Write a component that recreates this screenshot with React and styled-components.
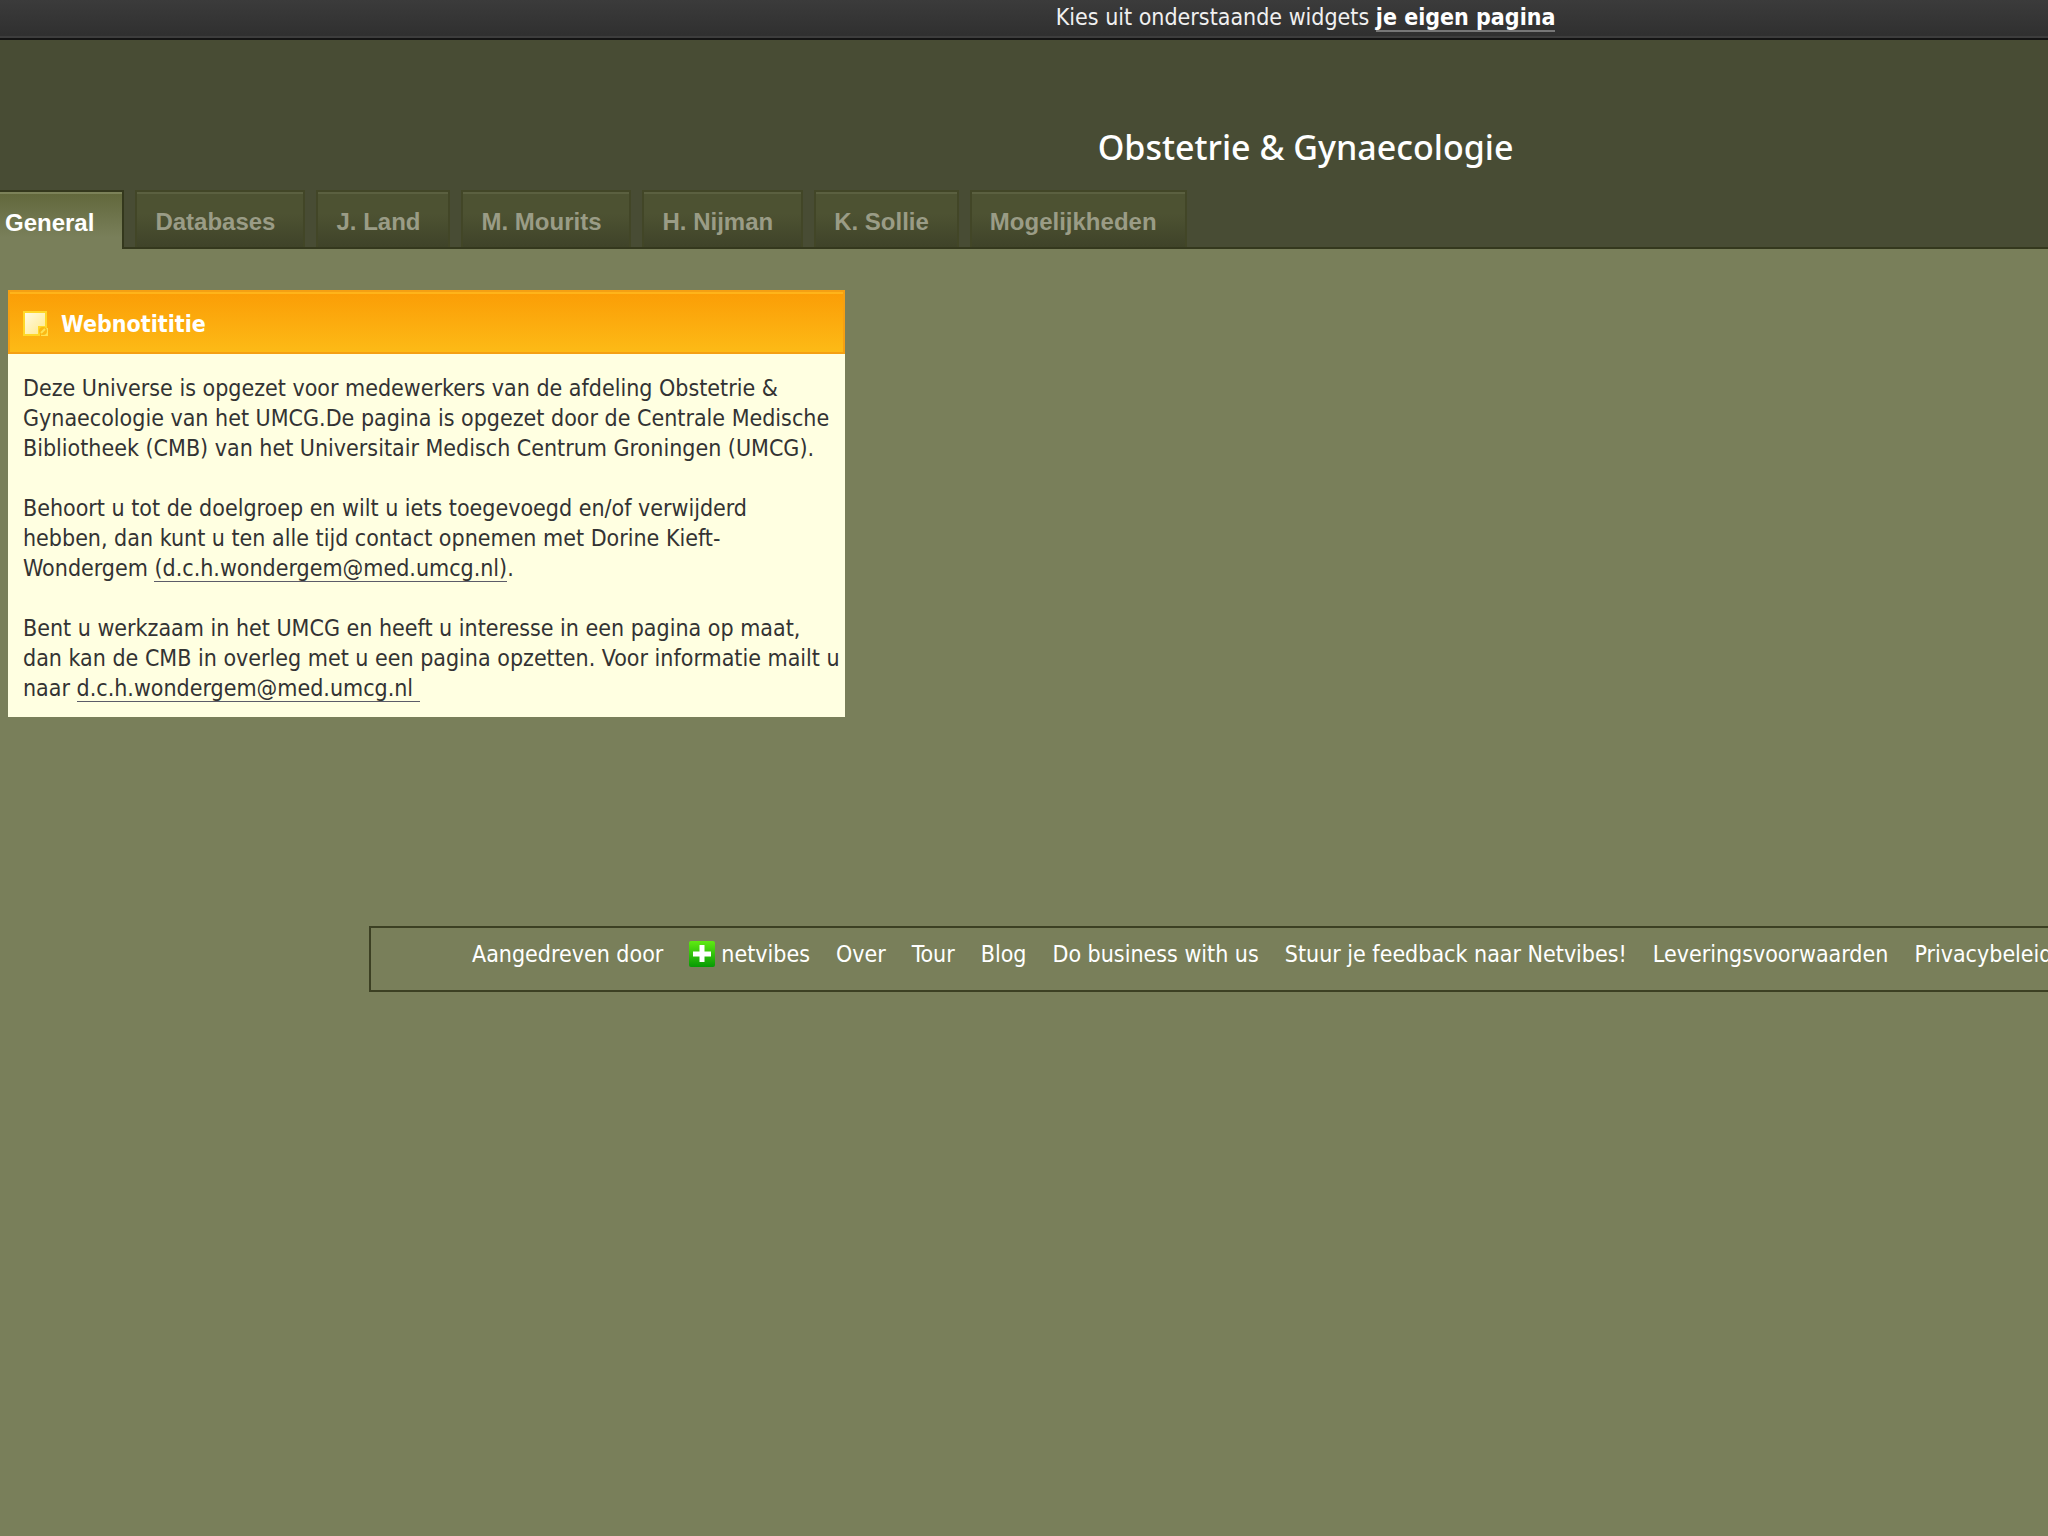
import React, { useState } from 'react';
import styled, { createGlobalStyle, css } from 'styled-components';

const GlobalStyle = createGlobalStyle`
  * {
    box-sizing: border-box;
  }

  html {
    overflow-x: hidden;
    background: #797f5a;
  }

  body {
    margin: 0;
    overflow-x: hidden;
    font-family: 'DejaVu Sans Condensed', 'DejaVu Sans', Tahoma, sans-serif;
    font-size: 23px;
    line-height: 30px;
  }
`;

// the page is wider than the window, everything in it is centered on that width
const Page = styled.div`
  width: 127.5%;
  min-height: 100vh;
  background: #797f5a;
`;

const TopBar = styled.div`
  height: 40px;
  padding-top: 2px;
  text-align: center;
  color: #f0f0f0;
  background: linear-gradient(#3b3b3b, #2f2f2f);
  border-bottom: 2px solid #141414;
  box-shadow: inset 0 -2px 0 #3d3d3d;
`;

const TopLink = styled.a`
  color: #fff;
  font-weight: bold;
  text-decoration: none;
  border-bottom: 2px solid #777;
`;

const Header = styled.header`
  padding-top: 85px;
  background: #484c34;
  border-bottom: 2px solid #34381d;
`;

const Title = styled.h1`
  margin: 0 0 21px;
  font-family: 'Noto Sans', 'Trebuchet MS', sans-serif;
  font-size: 34px;
  font-weight: 500;
  line-height: 44px;
  text-align: center;
  color: #fff;
`;

const Tabs = styled.nav`
  display: flex;
  gap: 11px;
`;

const activeTab = css`
  padding-top: 14px;
  padding-left: 5px;
  margin-bottom: -2px;
  color: #fff;
  background: linear-gradient(#61673b, #797f5a 80%);
  border-color: #34381d;
  border-left: 0;
  box-shadow: inset 0 2px 0 #7c8259;
`;

const Tab = styled.button`
  padding: 15px 28px 10px 18px;
  font-family: 'Liberation Sans', Arial, sans-serif;
  font-size: 24px;
  font-weight: bold;
  line-height: 30px;
  white-space: nowrap;
  color: #9a9c86;
  background: linear-gradient(#4d5232 40%, #3f4329);
  border: 2px solid #424627;
  border-bottom: 0;
  box-shadow: inset 0 2px 0 #5b6040;
  cursor: pointer;
  ${(props) => props.$active && activeTab}
`;

const Columns = styled.main`
  display: grid;
  grid-template-columns: repeat(3, 1fr);
  gap: 42px;
  padding: 41px 8px 0;
`;

const Widget = styled.section`
  background: #ffffe1;
`;

const WidgetHeader = styled.header`
  display: flex;
  align-items: center;
  gap: 12px;
  height: 64px;
  padding: 3px 13px 0;
  background: linear-gradient(#fb9d06, #fdba16);
  border: 2px solid #f5a013;
  box-shadow: inset 0 2px 0 #ffb41a;
`;

const WidgetTitle = styled.h2`
  margin: 0;
  font-size: 23px;
  line-height: 30px;
  color: #fff;
`;

const WidgetBody = styled.div`
  padding: 19px 4px 14px 15px;
  color: #333;
`;

const Paragraph = styled.p`
  margin: 0 0 30px;

  &:last-child {
    margin-bottom: 0;
  }
`;

const MailLink = styled.a`
  color: #333;
  text-decoration: none;
  white-space: pre;
  border-bottom: 1px solid #5c5c68;
`;

const Footer = styled.footer`
  display: flex;
  align-items: flex-start;
  gap: 26px;
  height: 66px;
  margin: 209px 369px 0;
  padding: 11px 0 0 101px;
  white-space: nowrap;
  color: #fff;
  border: 2px solid #3c4023;
`;

const FooterLink = styled.a`
  display: flex;
  align-items: center;
  gap: 6px;
  color: #fff;
  text-decoration: none;
`;

const NoteIcon = () => (
  <svg width="26" height="26" viewBox="0 0 26 26" aria-hidden="true">
    <defs>
      <linearGradient id="note" x1="0" y1="0" x2="1" y2="1">
        <stop offset="0" stopColor="#fffbe6" />
        <stop offset="1" stopColor="#ffe988" />
      </linearGradient>
    </defs>
    <path d="M1 1h22v15h-7v8H1z" fill="url(#note)" stroke="#ffd829" strokeWidth="2" />
    <path d="M18 17h7v8h-7z" fill="#ffe252" />
    <circle cx="20" cy="20" r="4" fill="#fbb915" />
    <path d="M18 22l4-4" stroke="#ffe252" strokeWidth="2" />
  </svg>
);

const PlusIcon = () => (
  <svg width="26" height="26" viewBox="0 0 26 26" aria-hidden="true">
    <defs>
      <linearGradient id="plus" x1="0" y1="0" x2="0" y2="1">
        <stop offset="0" stopColor="#5fea12" />
        <stop offset="1" stopColor="#069a04" />
      </linearGradient>
    </defs>
    <rect width="26" height="26" rx="2" fill="url(#plus)" />
    <path d="M13 4v17M4 13h18" stroke="#fff" strokeWidth="5" />
  </svg>
);

const tabs = [
  'General',
  'Databases',
  'J. Land',
  'M. Mourits',
  'H. Nijman',
  'K. Sollie',
  'Mogelijkheden',
];

const footerLinks = [
  'Over',
  'Tour',
  'Blog',
  'Do business with us',
  'Stuur je feedback naar Netvibes!',
  'Leveringsvoorwaarden',
  'Privacybeleid',
];

const App = () => {
  const [active, setActive] = useState('General');

  return (
    <Page>
      <GlobalStyle />
      <TopBar>
        Kies uit onderstaande widgets <TopLink href="#pagina">je eigen pagina</TopLink>
      </TopBar>
      <Header>
        <Title>Obstetrie &amp; Gynaecologie</Title>
        <Tabs>
          {tabs.map((tab) => (
            <Tab key={tab} type="button" $active={tab === active} onClick={() => setActive(tab)}>
              {tab}
            </Tab>
          ))}
        </Tabs>
      </Header>
      <Columns>
        <Widget>
          <WidgetHeader>
            <NoteIcon />
            <WidgetTitle>Webnotititie</WidgetTitle>
          </WidgetHeader>
          <WidgetBody>
            <Paragraph>
              Deze Universe is opgezet voor medewerkers van de afdeling Obstetrie &amp;
              <br />
              Gynaecologie van het UMCG.De pagina is opgezet door de Centrale Medische
              <br />
              Bibliotheek (CMB) van het Universitair Medisch Centrum Groningen (UMCG).
            </Paragraph>
            <Paragraph>
              Behoort u tot de doelgroep en wilt u iets toegevoegd en/of verwijderd
              <br />
              hebben, dan kunt u ten alle tijd contact opnemen met Dorine Kieft-
              <br />
              Wondergem <MailLink href="mailto:d.c.h.wondergem@med.umcg.nl">(d.c.h.wondergem@med.umcg.nl)</MailLink>.
            </Paragraph>
            <Paragraph>
              Bent u werkzaam in het UMCG en heeft u interesse in een pagina op maat,
              <br />
              dan kan de CMB in overleg met u een pagina opzetten. Voor informatie mailt u
              <br />
              naar <MailLink href="mailto:d.c.h.wondergem@med.umcg.nl">{'d.c.h.wondergem@med.umcg.nl '}</MailLink>
            </Paragraph>
          </WidgetBody>
        </Widget>
      </Columns>
      <Footer>
        <span>Aangedreven door</span>
        <FooterLink href="#netvibes">
          <PlusIcon />
          netvibes
        </FooterLink>
        {footerLinks.map((label) => (
          <FooterLink key={label} href="#footer">{label}</FooterLink>
        ))}
      </Footer>
    </Page>
  );
};

export default App;
